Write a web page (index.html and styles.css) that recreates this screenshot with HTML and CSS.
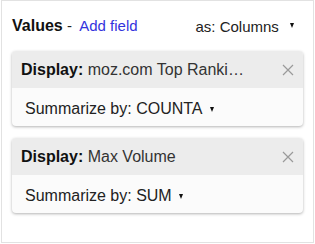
FILE: index.html
```html
<!DOCTYPE html>
<html>
  <head>
    <link rel="stylesheet" href="styles.css">
  </head>

  <body>
    <div class="panel">
      <div class="panelhead">
        <div class="headleft">
          <span class="paneltitle">Values</span>
          <span class="dash">-</span>
          <span class="addlink">Add field</span>
        </div>
        <div class="layoutpick">
          as: Columns <span class="caret"></span>
        </div>
      </div>

      <div class="fieldcard">
        <div class="cardhead">
          <div class="cardtitle"><b>Display:</b> moz.com Top Rankings Keyword</div>
          <svg class="closeicon" width="12" height="12" viewBox="0 0 12 12">
            <path d="M1 1 L11 11 M11 1 L1 11" stroke="#9a9a9a" stroke-width="1.2" fill="none"/>
          </svg>
        </div>
        <div class="cardbody">
          Summarize by: COUNTA <span class="caret"></span>
        </div>
      </div>

      <div class="fieldcard">
        <div class="cardhead">
          <div class="cardtitle"><b>Display:</b> Max Volume</div>
          <svg class="closeicon" width="12" height="12" viewBox="0 0 12 12">
            <path d="M1 1 L11 11 M11 1 L1 11" stroke="#9a9a9a" stroke-width="1.2" fill="none"/>
          </svg>
        </div>
        <div class="cardbody">
          Summarize by: SUM <span class="caret"></span>
        </div>
      </div>
    </div>
  </body>
</html>
```

FILE: styles.css
```css
body {
  margin: 0;
  font-family: "Liberation Sans", Arial, sans-serif;
  background-color: white;
  color: #222;
}

.panel {
  box-sizing: border-box;
  width: 313px;
  height: 243px;
  margin-left: 1px;
  border: 1px solid #e2e2e2;
  padding: 10px 10px 0 10px;
}

.panelhead {
  display: flex;
  justify-content: space-between;
  align-items: center;
  height: 30px;
  font-size: 15px;
  padding-right: 9px;
}

.paneltitle {
  font-weight: 700;
  font-size: 16px;
  color: #111;
}

.dash {
  margin: 0 4px 0 0;
}

.addlink {
  color: #3333dd;
}

.caret {
  display: inline-block;
  width: 0;
  height: 0;
  border-left: 2.5px solid transparent;
  border-right: 2.5px solid transparent;
  border-top: 5px solid #111;
  vertical-align: 4px;
  margin-left: 7px;
}

.fieldcard {
  margin-top: 10px;
  border-radius: 4px;
  background-color: #fbfbfb;
  box-shadow: 0 1px 3px rgba(0, 0, 0, 0.3);
  overflow: hidden;
}

.fieldcard + .fieldcard {
  margin-top: 12px;
}

.cardhead {
  display: flex;
  align-items: center;
  height: 37px;
  padding: 1px 9px 0 9px;
  box-sizing: border-box;
  background-color: #ececec;
  font-size: 16px;
  color: #333;
}

.cardtitle {
  flex: 1;
  white-space: nowrap;
  overflow: hidden;
  text-overflow: ellipsis;
  padding-right: 32px;
}

.cardtitle b {
  color: #111;
}

.closeicon {
  flex: none;
}

.cardbody {
  box-sizing: border-box;
  height: 38px;
  display: flex;
  align-items: center;
  padding: 4px 13px 0 13px;
  font-size: 16px;
  color: #222;
}
```
